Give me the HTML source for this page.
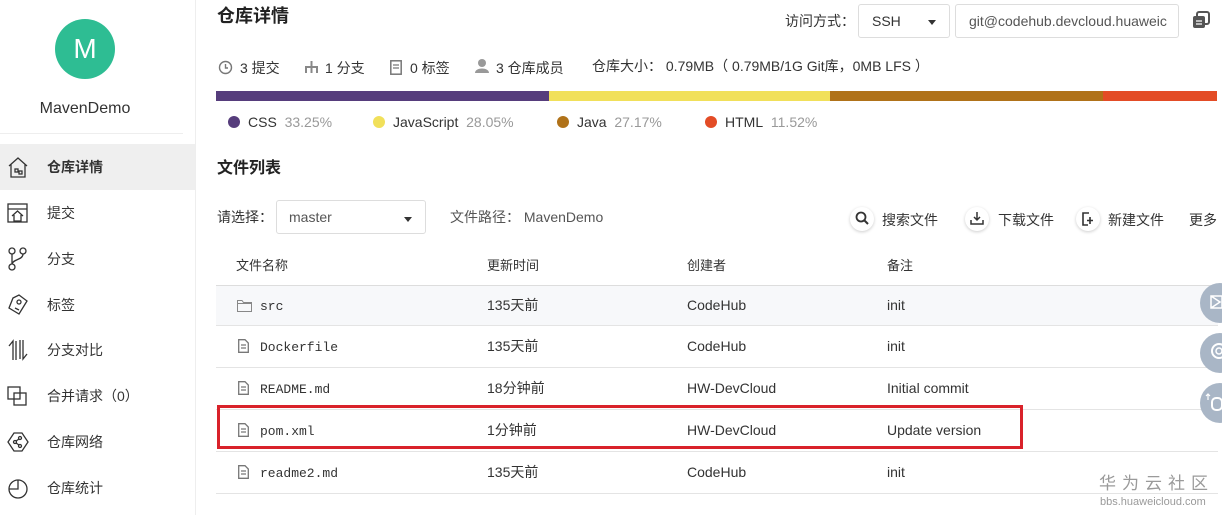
<!DOCTYPE html>
<html><head><meta charset="utf-8"><style>
*{margin:0;padding:0;box-sizing:border-box}
body{width:1222px;height:515px;overflow:hidden;background:#fff;font-family:"Liberation Sans","Noto Sans CJK SC",sans-serif;color:#333;position:relative;font-size:14px;line-height:17px}
.a{position:absolute;white-space:nowrap;line-height:17px}
.nav{position:absolute;left:0;width:195px;height:46px;font-size:14px;color:#333}
.nav span{position:absolute;left:47px;top:15px;line-height:17px}
.nav svg{position:absolute;left:7px;top:11px}
.mono{font-family:"Liberation Mono",monospace;font-size:13px}
.hl{position:absolute;left:216px;width:1002px;height:1px;background:#e4e4e4}
.g{color:#999}
.dot{display:inline-block;width:12px;height:12px;border-radius:50%;vertical-align:-1px;margin-right:8px}
.btn{position:absolute;width:24px;height:24px;border-radius:50%;box-shadow:0 1px 3px rgba(0,0,0,.2);background:#fff}
.fl{position:absolute;left:1200px;width:40px;height:40px;border-radius:50%;background:#a9b6c6}
</style></head><body>
<div class="a" style="left:195px;top:0;width:1px;height:515px;background:#eee"></div>
<div class="a" style="left:55px;top:19px;width:60px;height:60px;border-radius:50%;background:#2ebd93;color:#fff;font-size:28px;text-align:center;line-height:60px">M</div>
<div class="a" style="left:0;width:170px;top:100px;text-align:center;font-size:16px;color:#333">MavenDemo</div>
<div class="a" style="left:0;top:133px;width:183px;height:1px;background:#eee"></div>
<div class="nav" style="top:144px;background:#efefef;font-weight:bold"><svg width="22" height="24" viewBox="0 0 22 24" fill="none" stroke="#333" stroke-width="1.3"><path d="M2 11 L11 3 L20 11 M4 9 V22 H18 V9"/><rect x="8" y="14" width="3" height="3"/><rect x="12" y="16" width="3" height="3"/></svg><span>仓库详情</span></div>
<div class="nav" style="top:190px"><svg width="22" height="24" viewBox="0 0 22 24" fill="none" stroke="#333" stroke-width="1.3"><rect x="1" y="3" width="19" height="18"/><path d="M1 8 H20 M5 15 L10.5 10 L16 15 M7 14 V20 H14 V14"/></svg><span>提交</span></div>
<div class="nav" style="top:236px"><svg width="22" height="24" viewBox="0 0 22 24" fill="none" stroke="#333" stroke-width="1.3"><circle cx="5" cy="4" r="3"/><circle cx="16" cy="4" r="3"/><circle cx="5" cy="20" r="3"/><path d="M5 7 V17 M16 7 C16 13 6 12 5 17"/></svg><span>分支</span></div>
<div class="nav" style="top:282px"><svg width="22" height="24" viewBox="0 0 22 24" fill="none" stroke="#333" stroke-width="1.3"><path d="M12 2 L20 8 L12 21 L2 15 L6 5 Z"/><circle cx="12" cy="9" r="2"/><path d="M8 15 L12 17"/></svg><span>标签</span></div>
<div class="nav" style="top:327px"><svg width="22" height="24" viewBox="0 0 22 24" fill="none" stroke="#333" stroke-width="1.3"><path d="M6 22 V3 L2 8 M9 22 V3 M13 2 V21 M16 2 V21 L20 16"/></svg><span>分支对比</span></div>
<div class="nav" style="top:373px"><svg width="22" height="24" viewBox="0 0 22 24" fill="none" stroke="#333" stroke-width="1.3"><rect x="1" y="3" width="12" height="12"/><rect x="7" y="9" width="12" height="12"/></svg><span>合并请求（0）</span></div>
<div class="nav" style="top:419px"><svg width="22" height="24" viewBox="0 0 22 24" fill="none" stroke="#333" stroke-width="1.3"><path d="M7 3 H15 L21 12 L15 21 H7 L1 12 Z"/><circle cx="13" cy="8" r="1.5"/><circle cx="8" cy="12" r="1.5"/><circle cx="13" cy="16" r="1.5"/><path d="M9 11 L12 9 M9 13 L12 15"/></svg><span>仓库网络</span></div>
<div class="nav" style="top:465px"><svg width="22" height="24" viewBox="0 0 22 24" fill="none" stroke="#333" stroke-width="1.3"><circle cx="11" cy="13" r="9"/><path d="M11 4 V13 H2"/></svg><span>仓库统计</span></div>

<div class="a" style="left:217px;top:8px;font-size:18px;font-weight:bold;color:#222">仓库详情</div>
<div class="a" style="left:785px;top:13px;font-size:14px;color:#333">访问方式：</div>
<div class="a" style="left:858px;top:4px;width:92px;height:34px;border:1px solid #ddd;border-radius:3px"><span class="a" style="left:13px;top:8px;color:#333">SSH</span><span class="a" style="left:69px;top:15px;border:4px solid transparent;border-top:5px solid #333"></span></div>
<div class="a" style="left:955px;top:4px;width:224px;height:34px;border:1px solid #ddd;border-radius:3px;overflow:hidden"><span class="a" style="left:13px;top:8px;color:#555">git@codehub.devcloud.huaweic</span></div>
<svg class="a" style="left:1192px;top:11px" width="19" height="18" viewBox="0 0 19 18"><rect x="5" y="1" width="12" height="12" rx="2" fill="none" stroke="#555" stroke-width="2"/><rect x="1" y="5" width="12" height="12" rx="2" fill="#555"/><path d="M4 10 H10 M4 13 H10" stroke="#fff" stroke-width="1.3"/></svg>

<svg class="a" style="left:218px;top:60px" width="15" height="15" viewBox="0 0 15 15"><circle cx="7.5" cy="7.5" r="6" fill="none" stroke="#777" stroke-width="1.4"/><path d="M7.5 4 V8 H10" fill="none" stroke="#777" stroke-width="1.4"/></svg>
<div class="a" style="left:240px;top:60px">3 提交</div>
<svg class="a" style="left:304px;top:60px" width="15" height="15" viewBox="0 0 15 15"><path d="M7.5 1 V7 M2 13 V7 H13 V13 M7.5 7 V13" stroke="#888" stroke-width="2" fill="none"/></svg>
<div class="a" style="left:325px;top:60px">1 分支</div>
<svg class="a" style="left:390px;top:60px" width="12" height="15" viewBox="0 0 12 15"><rect x="0.8" y="0.8" width="10.4" height="13.4" fill="none" stroke="#777" stroke-width="1.5"/><path d="M3 5 H9 M3 8 H9" stroke="#777" stroke-width="1.3"/></svg>
<div class="a" style="left:410px;top:60px">0 标签</div>
<svg class="a" style="left:474px;top:58px" width="16" height="16" viewBox="0 0 16 16"><circle cx="8" cy="5" r="4" fill="#999"/><path d="M1 15 C1 9 15 9 15 15 Z" fill="#999"/></svg>
<div class="a" style="left:496px;top:60px">3 仓库成员</div>
<div class="a" style="left:592px;top:58px">仓库大小： 0.79MB（ 0.79MB/1G Git库，0MB LFS ）</div>

<div class="a" style="left:216px;top:91px;width:333px;height:10px;background:#563d7c"></div>
<div class="a" style="left:549px;top:91px;width:281px;height:10px;background:#f1e05a"></div>
<div class="a" style="left:830px;top:91px;width:273px;height:10px;background:#b07219"></div>
<div class="a" style="left:1103px;top:91px;width:114px;height:10px;background:#e34c26"></div>
<div class="a" style="left:228px;top:114px"><span class="dot" style="background:#563d7c"></span>CSS&nbsp; <span class="g">33.25%</span></div>
<div class="a" style="left:373px;top:114px"><span class="dot" style="background:#f1e05a"></span>JavaScript&nbsp; <span class="g">28.05%</span></div>
<div class="a" style="left:557px;top:114px"><span class="dot" style="background:#b07219"></span>Java&nbsp; <span class="g">27.17%</span></div>
<div class="a" style="left:705px;top:114px"><span class="dot" style="background:#e34c26"></span>HTML&nbsp; <span class="g">11.52%</span></div>

<div class="a" style="left:217px;top:160px;font-size:16px;font-weight:bold;color:#222">文件列表</div>
<div class="a" style="left:217px;top:209px">请选择：</div>
<div class="a" style="left:276px;top:200px;width:150px;height:34px;border:1px solid #ddd;border-radius:3px"><span class="a" style="left:12px;top:8px;color:#555">master</span><span class="a" style="left:127px;top:16px;border:4px solid transparent;border-top:5px solid #333"></span></div>
<div class="a" style="left:450px;top:209px;color:#555">文件路径： MavenDemo</div>

<div class="btn" style="left:850px;top:207px"></div>
<svg class="a" style="left:855px;top:211px" width="14" height="14" viewBox="0 0 14 14"><circle cx="6" cy="6" r="4.5" fill="none" stroke="#333" stroke-width="1.8"/><path d="M9 9 L13 13" stroke="#333" stroke-width="2"/></svg>
<div class="a" style="left:882px;top:212px">搜索文件</div>
<div class="btn" style="left:965px;top:207px"></div>
<svg class="a" style="left:970px;top:212px" width="14" height="13" viewBox="0 0 14 13"><path d="M7 0 V8 M4 5 L7 8 L10 5 M1 8 V12 H13 V8" fill="none" stroke="#333" stroke-width="1.5"/></svg>
<div class="a" style="left:998px;top:212px">下载文件</div>
<div class="btn" style="left:1076px;top:207px"></div>
<svg class="a" style="left:1082px;top:212px" width="12" height="14" viewBox="0 0 12 14"><path d="M7 1 H1 V13 H6" fill="none" stroke="#333" stroke-width="1.6"/><path d="M8 5 V12 M5 8.5 H11" stroke="#333" stroke-width="1.6"/></svg>
<div class="a" style="left:1108px;top:212px">新建文件</div>
<div class="a" style="left:1189px;top:212px">更多</div>

<div class="a" style="left:236px;top:257px;font-size:13px;color:#333">文件名称</div>
<div class="a" style="left:487px;top:257px;font-size:13px;color:#333">更新时间</div>
<div class="a" style="left:687px;top:257px;font-size:13px;color:#333">创建者</div>
<div class="a" style="left:887px;top:257px;font-size:13px;color:#333">备注</div>
<div class="a" style="left:216px;top:285px;width:1002px;height:40px;background:#f7f8fa"></div>
<div class="hl" style="top:285px;background:#ddd"></div>
<div class="hl" style="top:325px"></div>
<div class="hl" style="top:367px"></div>
<div class="hl" style="top:409px"></div>
<div class="hl" style="top:451px"></div>
<div class="hl" style="top:493px"></div>

<svg class="a" style="left:237px;top:300px" width="15" height="12" viewBox="0 0 15 12"><path d="M0.5 0.5 H5 L6.5 2.5 H14.5 V11.5 H0.5 Z M0.5 3.5 H14.5" fill="none" stroke="#888"/></svg>
<div class="a mono" style="left:260px;top:298px">src</div>
<div class="a" style="left:487px;top:297px">135天前</div><div class="a" style="left:687px;top:297px">CodeHub</div><div class="a" style="left:887px;top:297px">init</div>

<svg class="a" style="left:238px;top:339px" width="11" height="14" viewBox="0 0 11 14"><path d="M0.7 0.7 H7 L10.3 4 V13.3 H0.7 Z M3 6 H8 M3 9 H8" fill="none" stroke="#777" stroke-width="1.3"/></svg>
<div class="a mono" style="left:260px;top:339px">Dockerfile</div>
<div class="a" style="left:487px;top:338px">135天前</div><div class="a" style="left:687px;top:338px">CodeHub</div><div class="a" style="left:887px;top:338px">init</div>

<svg class="a" style="left:238px;top:381px" width="11" height="14" viewBox="0 0 11 14"><path d="M0.7 0.7 H7 L10.3 4 V13.3 H0.7 Z M3 6 H8 M3 9 H8" fill="none" stroke="#777" stroke-width="1.3"/></svg>
<div class="a mono" style="left:260px;top:381px">README.md</div>
<div class="a" style="left:487px;top:380px">18分钟前</div><div class="a" style="left:687px;top:380px">HW-DevCloud</div><div class="a" style="left:887px;top:380px">Initial commit</div>

<svg class="a" style="left:238px;top:423px" width="11" height="14" viewBox="0 0 11 14"><path d="M0.7 0.7 H7 L10.3 4 V13.3 H0.7 Z M3 6 H8 M3 9 H8" fill="none" stroke="#777" stroke-width="1.3"/></svg>
<div class="a mono" style="left:260px;top:423px">pom.xml</div>
<div class="a" style="left:487px;top:422px">1分钟前</div><div class="a" style="left:687px;top:422px">HW-DevCloud</div><div class="a" style="left:887px;top:422px">Update version</div>
<div class="a" style="left:217px;top:405px;width:806px;height:44px;border:3px solid #d9222a"></div>

<svg class="a" style="left:238px;top:465px" width="11" height="14" viewBox="0 0 11 14"><path d="M0.7 0.7 H7 L10.3 4 V13.3 H0.7 Z M3 6 H8 M3 9 H8" fill="none" stroke="#777" stroke-width="1.3"/></svg>
<div class="a mono" style="left:260px;top:465px">readme2.md</div>
<div class="a" style="left:487px;top:464px">135天前</div><div class="a" style="left:687px;top:464px">CodeHub</div><div class="a" style="left:887px;top:464px">init</div>

<div class="fl" style="top:283px"></div>
<svg class="a" style="left:1210px;top:295px" width="12" height="14"><path d="M1 1 H12 V13 H1 Z M1 1 L10 7 L1 13" fill="none" stroke="#fff" stroke-width="1.5"/></svg>
<div class="fl" style="top:333px"></div>
<svg class="a" style="left:1207px;top:340px" width="15" height="24"><circle cx="12" cy="11" r="7" fill="none" stroke="#fff" stroke-width="2"/><circle cx="12" cy="11" r="3" fill="none" stroke="#fff" stroke-width="1.5"/></svg>
<div class="fl" style="top:383px"></div>
<svg class="a" style="left:1204px;top:392px" width="18" height="22"><path d="M4 2 V8 M2 4 L4 2 L6 4" stroke="#fff" stroke-width="1.2" fill="none"/><rect x="8" y="6" width="10" height="12" rx="4" fill="none" stroke="#fff" stroke-width="2"/></svg>

<div class="a" style="left:1099px;top:474px;font-size:17px;line-height:20px;color:#9a9a9a;letter-spacing:6px">华为云社区</div>
<div class="a" style="left:1100px;top:496px;font-size:11px;line-height:12px;color:#9a9a9a">bbs.huaweicloud.com</div>
</body></html>
